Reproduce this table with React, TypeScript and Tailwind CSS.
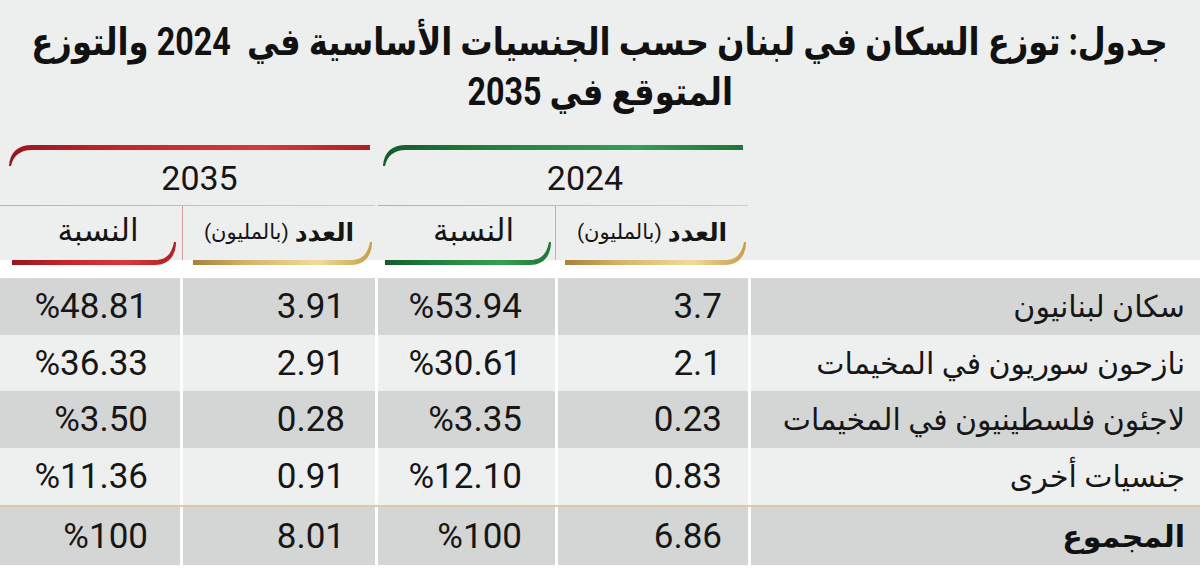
import React from "react";

const FONT = {
  fontFamily: '"Roboto", "DejaVu Sans", sans-serif',
};

const COLS = "grid grid-cols-[1fr_190px_177px_192px_180px] gap-x-[3px]";

type Tone = "green" | "red" | "gold";

const stops: Record<Tone, string[]> = {
  green: ["#145a2b", "#23803e", "#33a052", "#1e7538"],
  red: ["#96161d", "#c6232b", "#d8393b", "#b21d25"],
  gold: ["#a7813a", "#d4b366", "#efdc9c", "#c99d47"],
};

const Grad = ({ id, tone }: { id: string; tone: Tone }) => (
  <defs>
    <linearGradient id={id} x1="0" y1="0" x2="1" y2="0">
      <stop offset="0" stopColor={stops[tone][0]} />
      <stop offset="0.3" stopColor={stops[tone][1]} />
      <stop offset="0.7" stopColor={stops[tone][2]} />
      <stop offset="1" stopColor={stops[tone][3]} />
    </linearGradient>
  </defs>
);

// thick bar on top with a tapering arc going down on the left
const TopBar = ({ w, l, r, tone, id }: { w: number; l: number; r: number; tone: Tone; id: string }) => (
  <svg width={w} height={28} viewBox={`0 0 ${w} 28`} className="absolute top-0 left-0">
    <Grad id={id} tone={tone} />
    <path
      d={`M ${r} 5 L ${l + 22} 5 C ${l + 8} 5, ${l} 12, ${l - 1} 26 L ${l + 1} 26 C ${l + 3} 16, ${l + 10} 10, ${l + 22} 10 L ${r} 10 Z`}
      fill={`url(#${id})`}
    />
  </svg>
);

// thick bar at the bottom with a tapering arc going up on the right
const BottomBar = ({ w, a, b, tone, id }: { w: number; a: number; b: number; tone: Tone; id: string }) => (
  <svg width={w} height={26} viewBox={`0 0 ${w} 26`} className="absolute -bottom-[8px] left-0">
    <Grad id={id} tone={tone} />
    <path
      d={`M ${a} 18 L ${b - 20} 18 C ${b - 8} 18, ${b - 3} 11, ${b - 1} 0 L ${b + 1} 0 C ${b + 1} 13, ${b - 6} 23, ${b - 20} 23 L ${a} 23 Z`}
      fill={`url(#${id})`}
    />
  </svg>
);

type GroupProps = {
  year: string;
  tone: "green" | "red";
  width: number;
  top: [number, number];
  yearPad: string;
  countW: number;
  countBar: [number, number];
  pctBar: [number, number];
  pctW: number;
  line: string;
  divider: string;
};

const Group = (g: GroupProps) => (
  <div className="col-span-2 relative flex flex-col">
    <TopBar w={g.width} l={g.top[0]} r={g.top[1]} tone={g.tone} id={`top-${g.year}`} />
    <div className={`h-[65px] flex items-center justify-center pt-[11px] text-[34px] text-[#151515] ${g.yearPad}`}>
      {g.year}
    </div>
    <div className={`h-px ${g.line}`} />
    <div className="flex flex-1">
      <div className="relative w-[192px] flex items-center justify-center">
        <span className="text-[25px] font-bold text-[#151515]">العدد</span>
        <span className="text-[21px] text-[#151515] mr-[6px]">(بالمليون)</span>
        <BottomBar w={g.countW} a={g.countBar[0]} b={g.countBar[1]} tone="gold" id={`gold-${g.year}`} />
      </div>
      <div className={`w-px ${g.divider}`} />
      <div className="relative flex-1 flex items-center justify-center pl-[14px]">
        <span className="text-[31px] text-[#151515] -mt-[4px]">النسبة</span>
        <BottomBar w={g.pctW} a={g.pctBar[0]} b={g.pctBar[1]} tone={g.tone} id={`pct-${g.year}`} />
      </div>
    </div>
  </div>
);

const rows = [
  { label: "سكان لبنانيون", n24: "3.7", p24: "%53.94", n35: "3.91", p35: "%48.81", shade: "bg-[#d4d5d5]", h: "h-[57px]" },
  { label: "نازحون سوريون في المخيمات", n24: "2.1", p24: "%30.61", n35: "2.91", p35: "%36.33", shade: "bg-[#eef0ef]", h: "h-[56px]" },
  { label: "لاجئون فلسطينيون في المخيمات", n24: "0.23", p24: "%3.35", n35: "0.28", p35: "%3.50", shade: "bg-[#d4d5d5]", h: "h-[57px]" },
  { label: "جنسيات أخرى", n24: "0.83", p24: "%12.10", n35: "0.91", p35: "%11.36", shade: "bg-[#eef0ef]", h: "h-[57px]" },
];

const total = { label: "المجموع", n24: "6.86", p24: "%100", n35: "8.01", p35: "%100" };

const Num = ({ v, shade, pr }: { v: string; shade: string; pr: string }) => (
  <div className={`${shade} flex items-center ${pr}`}>
    <span dir="ltr" className="text-[35px] text-[#161616] leading-none">
      {v}
    </span>
  </div>
);

export default function App() {
  return (
    <div dir="rtl" className="w-[1200px] h-[570px] bg-white overflow-hidden" style={FONT}>
      <div className="bg-[#edefee]">
        <div className="h-[140px] pt-[17px] flex flex-col items-center text-[38px] leading-[50px] font-bold text-[#111]">
          <h1 className="whitespace-nowrap [transform:scaleX(0.85)]">
            جدول: توزع السكان في لبنان حسب الجنسيات الأساسية في&nbsp; 2024 والتوزع
          </h1>
          <h1 className="whitespace-nowrap [transform:scaleX(0.85)]">المتوقع في 2035</h1>
        </div>
        <div className={`${COLS} h-[120px]`}>
          <div />
          <Group
            year="2024"
            tone="green"
            width={370}
            top={[6, 365]}
            yearPad="pl-[44px]"
            countW={192}
            countBar={[9, 189]}
            pctW={177}
            pctBar={[7, 172]}
            line="bg-linear-to-r from-[#9fbaa5] to-[#dccb9f]"
            divider="bg-[#a7bcab]"
          />
          <Group
            year="2035"
            tone="red"
            width={375}
            top={[10, 370]}
            yearPad="pl-[24px]"
            countW={193}
            countBar={[10, 188]}
            pctW={181}
            pctBar={[12, 175]}
            line="bg-linear-to-r from-[#d9a3a6] to-[#dccb9f]"
            divider="bg-[#d5a0a3]"
          />
        </div>
      </div>
      <div className="h-[18px]" />
      {rows.map((r) => (
        <div key={r.label} className={`${COLS} ${r.h}`}>
          <div className={`${r.shade} flex items-center pr-[15px] text-[30px] text-[#161616]`}>{r.label}</div>
          <Num v={r.n24} shade={r.shade} pr="pr-[26px]" />
          <Num v={r.p24} shade={r.shade} pr="pr-[33px]" />
          <Num v={r.n35} shade={r.shade} pr="pr-[30px]" />
          <Num v={r.p35} shade={r.shade} pr="pr-[32px]" />
        </div>
      ))}
      <div className="h-[2px] bg-[#dccba4]" />
      <div className={`${COLS} h-[58px]`}>
        <div className="bg-[#d4d5d5] flex items-center pr-[15px] text-[30px] font-bold text-[#111]">{total.label}</div>
        <Num v={total.n24} shade="bg-[#d4d5d5]" pr="pr-[26px]" />
        <Num v={total.p24} shade="bg-[#d4d5d5]" pr="pr-[33px]" />
        <Num v={total.n35} shade="bg-[#d4d5d5]" pr="pr-[30px]" />
        <Num v={total.p35} shade="bg-[#d4d5d5]" pr="pr-[32px]" />
      </div>
    </div>
  );
}
